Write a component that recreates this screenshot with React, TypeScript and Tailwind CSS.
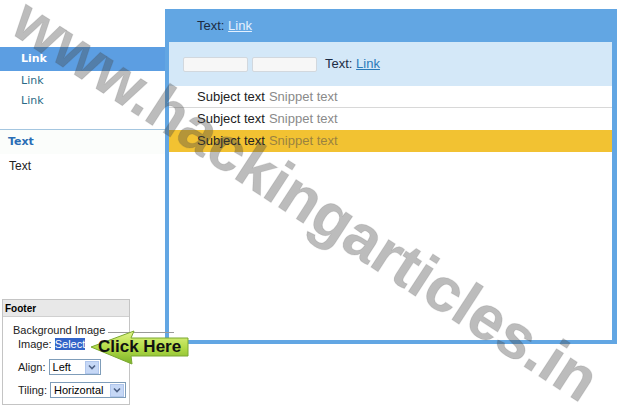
import React from 'react';

const arial = { fontFamily: '"Liberation Sans", Arial, sans-serif' };
const verdana = { fontFamily: '"DejaVu Sans", Verdana, sans-serif' };

function Chevron() {
  return (
    <span className="flex h-[13px] w-[14px] items-center justify-center bg-[#c6d8f6] border border-[#b0c6ec]">
      <svg width="8" height="6" viewBox="0 0 8 6">
        <path d="M1 1.5 L4 4.5 L7 1.5" fill="none" stroke="#4d6185" strokeWidth="1.6" />
      </svg>
    </span>
  );
}

function FakeSelect({ value, width }: { value: string; width: string }) {
  return (
    <div className={`flex h-[16px] items-center justify-between border border-[#7f9db9] bg-white pl-[3px] pr-[1px] ${width}`}>
      <span className="text-[11px] leading-none text-black">{value}</span>
      <Chevron />
    </div>
  );
}

export default function App() {
  return (
    <div className="relative flex h-[408px] w-[619px] overflow-hidden bg-white" style={arial}>
      {/* left column */}
      <aside className="flex w-[165px] flex-col">
        <div className="h-[47px]" />
        <div className="flex h-[24px] items-center bg-[#5c9ee2] pl-[21px] text-[11px] font-bold text-white" style={verdana}>
          Link
        </div>
        <div className="flex h-[20px] items-center pl-[21px] text-[11px] text-[#2b6a86]" style={verdana}>
          Link
        </div>
        <div className="flex h-[20px] items-center pl-[21px] text-[11px] text-[#2b6a86]" style={verdana}>
          Link
        </div>
        <div className="mt-[18px] border-t border-[#a4c6e0]" />
        <div className="flex h-[24px] items-center bg-[#fbfdfb] pl-[8px] text-[11px] font-bold text-[#2a6db5]" style={verdana}>
          Text
        </div>
        <div className="flex h-[24px] items-center pl-[9px] text-[12px] text-[#222]">Text</div>

        {/* footer box */}
        <div className="mb-[3px] ml-[2px] mt-auto h-[106px] w-[128px] border border-[#c4c4c4] bg-white">
          <div className="flex h-[17px] items-center border-b border-[#d0d0d0] bg-[#e8e8e8] pl-[2px] text-[10px] font-bold text-black">
            Footer
          </div>
          <div className="pl-[10px] pt-[6px] text-[11px] leading-[14px] text-[#222]">
            <div>Background Image</div>
            <div className="pl-[5px]">
              Image: <span className="bg-[#3264c8] text-white">Select</span>
            </div>
            <div className="mt-[8px] flex items-center gap-[3px] pl-[5px]">
              <span>Align:</span>
              <FakeSelect value="Left" width="w-[52px]" />
            </div>
            <div className="mt-[7px] flex items-center gap-[3px] pl-[5px]">
              <span>Tiling:</span>
              <FakeSelect value="Horizontal" width="w-[76px]" />
            </div>
          </div>
        </div>
      </aside>

      {/* main panel */}
      <main className="pt-[9px]">
        <div className="flex h-[335px] w-[452px] flex-col bg-[#62a6e3] pb-[4px] pl-[4px] pr-[5px]">
          <div className="flex h-[33px] items-center pl-[28px] text-[13px] text-[#1c2c44]">
            Text:&nbsp;<span className="text-[#e4f1ff] underline">Link</span>
          </div>
          <div className="flex flex-1 flex-col bg-white">
            <div className="flex h-[44px] items-center bg-[#d4e8f8] pl-[14px]">
              <div className="h-[15px] w-[65px] rounded-[2px] border border-[#d2d8de] bg-[#f7f7f7]" />
              <div className="ml-[4px] h-[15px] w-[65px] rounded-[2px] border border-[#d2d8de] bg-[#f7f7f7]" />
              <span className="ml-[8px] text-[13px] text-[#1c2c44]">
                Text:&nbsp;<span className="text-[#2a7ab8] underline">Link</span>
              </span>
            </div>
            <div className="flex h-[22px] items-center border-b border-[#d8d8d8] pl-[28px] text-[13px]">
              <span className="text-[#222]">Subject text</span>
              <span className="ml-[4px] text-[#8a8a8a]">Snippet text</span>
            </div>
            <div className="flex h-[22px] items-center pl-[28px] text-[13px]">
              <span className="text-[#222]">Subject text</span>
              <span className="ml-[4px] text-[#8a8a8a]">Snippet text</span>
            </div>
            <div className="flex h-[22px] items-center bg-[#f2c232] pl-[28px] text-[13px]">
              <span className="text-[#222]">Subject text</span>
              <span className="ml-[4px] text-[#9a8240]">Snippet text</span>
            </div>
          </div>
        </div>
      </main>

      {/* click here callout */}
      <div className="pointer-events-none absolute left-[108px] top-[332px] h-px w-[66px] bg-[#9a9a9a]" />
      <svg className="pointer-events-none absolute left-[90px] top-[329px]" width="100" height="36" viewBox="0 0 100 36">
        <defs>
          <linearGradient id="arrowFill" x1="0" y1="0" x2="0" y2="1">
            <stop offset="0" stopColor="#e2f48a" />
            <stop offset="0.5" stopColor="#b4dc48" />
            <stop offset="1" stopColor="#7cb22a" />
          </linearGradient>
        </defs>
        <polygon
          points="1,18 44,2 41,9 98,9 98,27 41,27 42,35"
          fill="url(#arrowFill)"
          stroke="#7aa830"
          strokeWidth="1"
        />
      </svg>
      <div className="pointer-events-none absolute left-[98px] top-[337px] flex h-[19px] items-center whitespace-nowrap text-[17px] font-bold leading-none text-[#111]">
        Click Here
      </div>

      {/* watermark */}
      <div
        className="pointer-events-none absolute left-[306px] top-[200px] -translate-x-1/2 -translate-y-1/2 rotate-[33deg] whitespace-nowrap text-[62px] font-bold leading-none text-[rgba(70,70,70,0.36)] [-webkit-text-stroke:1px_rgba(70,70,70,0.12)]"
        style={arial}
      >
        www.hackingarticles.in
      </div>
    </div>
  );
}
